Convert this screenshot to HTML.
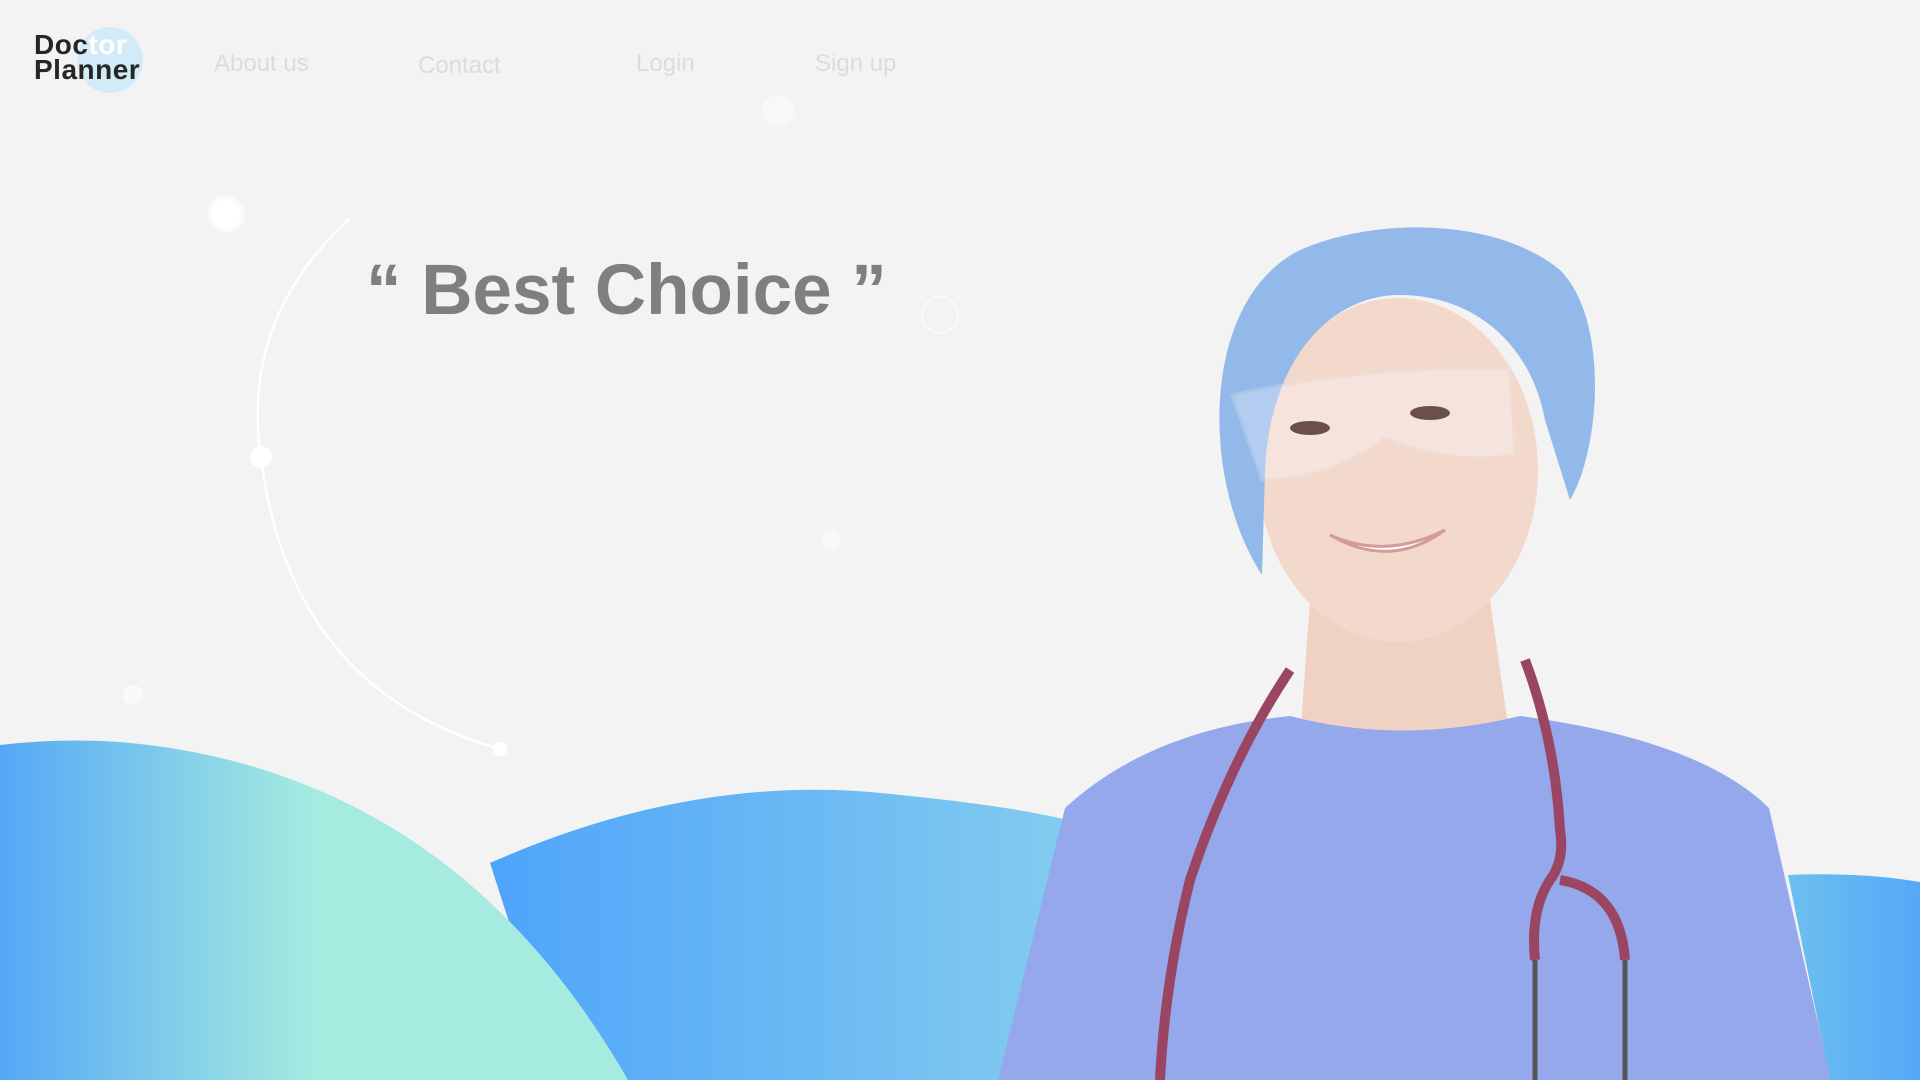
<!DOCTYPE html>
<html><head><meta charset="utf-8"><style>
html,body{margin:0;padding:0;width:1920px;height:1080px;overflow:hidden;background:#f3f3f3;font-family:"Liberation Sans",sans-serif}
svg{position:absolute;left:0;top:0}
.nav{position:absolute;top:50px;font-size:24px;color:#dcdcdc}
.logo{position:absolute;left:34px;top:32px;font-weight:bold;font-size:28px;line-height:25px;color:#262626;letter-spacing:0.5px}
.q{position:absolute;left:366px;top:250px;font-size:71px;font-weight:bold;color:#7f7f7f;white-space:pre}
</style></head><body>
<svg width="1920" height="1080" viewBox="0 0 1920 1080">
<defs>
<linearGradient id="g1" x1="0" x2="1"><stop offset="0" stop-color="#55a8f5"/><stop offset="0.5" stop-color="#a6ebe0"/><stop offset="1" stop-color="#a6ebe0"/></linearGradient>
<linearGradient id="g2" x1="0" x2="1"><stop offset="0" stop-color="#4ea4fa"/><stop offset="1" stop-color="#86cdee"/></linearGradient>
<linearGradient id="g3" x1="0" x2="1"><stop offset="0" stop-color="#6cc0ee"/><stop offset="1" stop-color="#55a8f8"/></linearGradient>
</defs>
<circle cx="110" cy="60" r="33" fill="#d3ebf9"/>
<path d="M350 218 Q240 320 261 457 Q290 690 500 749" fill="none" stroke="#fff" stroke-width="2.5"/>
<circle cx="226" cy="214" r="19" fill="#fff" opacity=".5"/><circle cx="226" cy="214" r="15" fill="#fff"/>
<circle cx="261" cy="457" r="11" fill="#fff"/>
<circle cx="500" cy="749" r="7" fill="#fff"/>
<circle cx="133" cy="695" r="10" fill="#fafafa"/>
<circle cx="778" cy="111" r="16" fill="#f8f8f8"/>
<circle cx="831" cy="540" r="10" fill="#f8f8f8"/>
<circle cx="940" cy="315" r="18" fill="none" stroke="#fafafa" stroke-width="2"/>
<path d="M490 863 Q700 770 900 795 Q1050 810 1100 830 L1100 1080 L560 1080 Z" fill="url(#g2)"/>
<path d="M0 745 Q60 738 120 742 Q450 770 628 1080 L0 1080 Z" fill="url(#g1)"/>
<path d="M1788 875 Q1860 872 1920 882 L1920 1080 L1830 1080 Z" fill="url(#g3)"/>
<!-- woman -->
<path d="M1310 600 L1490 600 L1510 740 L1300 740 Z" fill="#f0d2c4"/>
<path d="M1065 808 Q1150 730 1290 716 Q1400 745 1520 716 Q1700 740 1769 808 L1831 1080 L998 1080 Z" fill="#95a8ec"/>
<ellipse cx="1398" cy="470" rx="140" ry="172" fill="#f3d8cc"/>
<path d="M1262 575 C1200 480 1200 300 1300 250 C1380 215 1500 220 1560 270 C1610 320 1600 450 1570 500 L1545 420 C1530 340 1470 295 1400 295 C1330 295 1270 360 1265 470 Z" fill="#93b8ea"/>
<path d="M1232 395 Q1370 365 1510 368 L1515 455 Q1450 465 1385 438 Q1330 480 1262 480 Z" fill="#fff" opacity=".3" stroke="#e6e6e6" stroke-width="3"/>
<ellipse cx="1310" cy="428" rx="20" ry="7" fill="#6b5048"/>
<ellipse cx="1430" cy="413" rx="20" ry="7" fill="#6b5048"/>
<path d="M1330 535 Q1385 560 1445 530 Q1390 570 1330 535Z" fill="#fff" stroke="#d39c9a" stroke-width="3"/>
<path d="M1290 670 Q1230 760 1190 880 Q1165 980 1160 1080" fill="none" stroke="#9a4562" stroke-width="10"/>
<path d="M1525 660 Q1555 740 1560 830 Q1565 860 1550 880 Q1530 910 1535 960" fill="none" stroke="#9a4562" stroke-width="10"/>
<path d="M1560 880 Q1620 890 1625 960" fill="none" stroke="#9a4562" stroke-width="10"/>
<path d="M1535 960 L1535 1080 M1625 960 L1625 1080" stroke="#555" stroke-width="5"/>
</svg>
<div class="logo">Doc<span style="color:#fff">tor</span><br>Planner</div>
<div class="nav" style="left:214px">About us</div>
<div class="nav" style="left:418px;top:52px">Contact</div>
<div class="nav" style="left:636px">Login</div>
<div class="nav" style="left:815px">Sign up</div>
<div class="q">“ Best Choice ”</div>
</body></html>
